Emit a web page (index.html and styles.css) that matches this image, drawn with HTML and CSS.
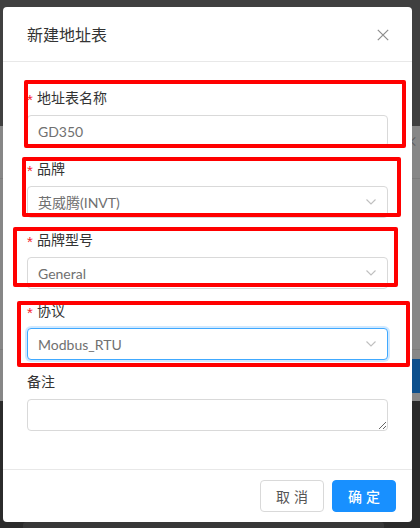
FILE: index.html
```html
<!DOCTYPE html>
<html lang="zh-CN">
<head>
<meta charset="utf-8">
<title>新建地址表</title>
<link rel="stylesheet" href="styles.css">
</head>
<body>
<div class="page">
  <div class="page-top"></div>
  <div class="page-dialog">
    <div class="pd-head"><span class="pd-close">×</span></div>
    <div class="pd-body"></div>
    <div class="pd-foot"><span class="pd-btn"></span></div>
  </div>
  <div class="page-bottom"><div class="page-card"></div></div>
</div>

<div class="modal">
  <div class="modal-header">
    <div class="modal-title">新建地址表</div>
    <span class="modal-close">
      <svg width="12" height="12" viewBox="0 0 12 12"><path d="M0.8 0.8 L11.2 11.2 M11.2 0.8 L0.8 11.2" stroke="#8c8c8c" stroke-width="1.2" fill="none"/></svg>
    </span>
  </div>
  <div class="modal-body">
    <div class="form-item">
      <div class="form-label required">地址表名称</div>
      <div class="input">GD350</div>
    </div>
    <div class="form-item">
      <div class="form-label required">品牌</div>
      <div class="input select"><span>英威腾(INVT)</span><svg class="arrow" width="10" height="6" viewBox="0 0 10 6"><path d="M0.5 0.5 L5 5 L9.5 0.5" stroke="#bfbfbf" stroke-width="1.1" fill="none"/></svg></div>
    </div>
    <div class="form-item">
      <div class="form-label required">品牌型号</div>
      <div class="input select"><span>General</span><svg class="arrow" width="10" height="6" viewBox="0 0 10 6"><path d="M0.5 0.5 L5 5 L9.5 0.5" stroke="#bfbfbf" stroke-width="1.1" fill="none"/></svg></div>
    </div>
    <div class="form-item">
      <div class="form-label required">协议</div>
      <div class="input select focused"><span>Modbus_RTU</span><svg class="arrow" width="10" height="6" viewBox="0 0 10 6"><path d="M0.5 0.5 L5 5 L9.5 0.5" stroke="#bfbfbf" stroke-width="1.1" fill="none"/></svg></div>
    </div>
    <div class="form-item">
      <div class="form-label">备注</div>
      <textarea class="textarea"></textarea>
    </div>
  </div>
  <div class="modal-footer">
    <button class="btn"><span>取</span><span>消</span></button>
    <button class="btn btn-primary"><span>确</span><span>定</span></button>
  </div>
</div>

<div class="mark mark-1"></div>
<div class="mark mark-2"></div>
<div class="mark mark-3"></div>
<div class="mark mark-4"></div>
</body>
</html>
```

FILE: styles.css
```css
* { box-sizing: border-box; }
html, body { margin: 0; padding: 0; }
body {
  width: 420px;
  height: 528px;
  overflow: hidden;
  position: relative;
  background: #2b2b2b;
  font-family: "Noto Sans CJK SC", "Noto Sans", sans-serif;
  font-size: 14px;
}

/* page behind the mask */
.page-top { height: 126px; background: #404040; }
.page-dialog {
  height: 275px;
  background: #878787;
  display: flex;
  flex-direction: column;
}
.pd-head {
  height: 53px;
  border-bottom: 1px solid #7c7c7c;
  display: flex;
  justify-content: flex-end;
  align-items: flex-start;
  padding-top: 6px;
}
.pd-close { color: #5e5e5e; font-size: 14px; line-height: 16px; margin-right: 2px; }
.pd-body { flex: 1; }
.pd-foot {
  height: 52px;
  border-top: 1px solid #7c7c7c;
  display: flex;
  justify-content: flex-end;
  align-items: center;
}
.pd-btn { width: 14px; height: 34px; background: #0d4f8c; border-radius: 3px 0 0 3px; }
.page-bottom { padding: 121px 36px 0 23px; }
.page-card { height: 20px; background: #383838; border-radius: 3px 3px 0 0; }

/* modal */
.modal {
  position: absolute;
  left: 3px;
  top: 7px;
  width: 409px;
  background: #fff;
  border-radius: 4px;
}
.modal-header {
  height: 55px;
  padding: 16px 23px 16px 24px;
  border-bottom: 1px solid #e8e8e8;
  display: flex;
  align-items: center;
  justify-content: space-between;
}
.modal-title {
  font-size: 16px;
  line-height: 22px;
  color: #333;
}
.modal-close { display: flex; padding-top: 1px; }

.modal-body { padding: 24px 24px 38px; }
.form-item { margin-bottom: 10px; }
.form-item:last-child { margin-bottom: 0; }
.form-label {
  line-height: 22px;
  padding-bottom: 7px;
  color: #333;
  font-size: 14px;
}
.form-label.required::before {
  content: "*";
  display: inline-block;
  width: 6px;
  margin-right: 4px;
  color: #f5222d;
  font-family: "Liberation Sans", sans-serif;
  font-size: 15px;
  line-height: 1;
  vertical-align: -2px;
}
.input {
  height: 32px;
  border: 1px solid #d9d9d9;
  border-radius: 4px;
  padding: 0 11px 0 10px;
  display: flex;
  align-items: center;
  color: #707070;
  font-family: "Lato", "Noto Sans CJK SC", sans-serif;
  font-size: 14px;
  background: #fff;
}
.select .arrow { margin-left: auto; }
.focused {
  border-color: #40a9ff;
  box-shadow: 0 0 0 2px rgba(24, 144, 255, 0.2);
}
.textarea {
  display: block;
  width: 100%;
  height: 32px;
  margin: 0;
  border: 1px solid #d9d9d9;
  border-radius: 4px;
  padding: 4px 11px;
  font-family: inherit;
  font-size: 14px;
  resize: vertical;
  outline: none;
}

.modal-footer {
  border-top: 1px solid #e8e8e8;
  padding: 10px 16px;
  display: flex;
  justify-content: flex-end;
  gap: 8px;
}
.btn {
  width: 64px;
  height: 32px;
  padding: 0;
  border: 1px solid #d9d9d9;
  border-radius: 4px;
  background: #fff;
  color: #555;
  font-family: inherit;
  font-size: 14px;
  display: flex;
  align-items: center;
  justify-content: center;
  gap: 4px;
}
.btn-primary {
  background: #1890ff;
  border-color: #1890ff;
  color: #fff;
  font-weight: 500;
}

/* red annotation frames drawn over the screenshot */
.mark {
  position: absolute;
  border: 4px solid #ff0000;
  border-radius: 2px;
  pointer-events: none;
}
.mark-1 { left: 24px; top: 80px; width: 382px; height: 68px; }
.mark-2 { left: 22px; top: 157px; width: 379px; height: 60px; }
.mark-3 { left: 13px; top: 227px; width: 385px; height: 60px; }
.mark-4 { left: 17px; top: 301px; width: 393px; height: 66px; }
```
